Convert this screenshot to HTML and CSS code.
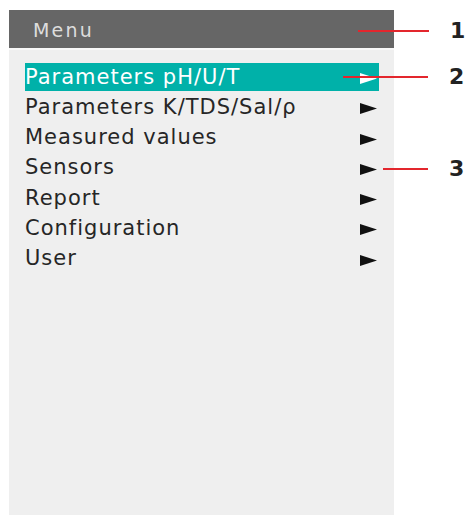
FILE: index.html
```html
<!DOCTYPE html>
<html lang="en">
<head>
    <meta charset="UTF-8">
    <meta name="viewport" content="width=device-width, initial-scale=1.0">
    <title>Menu</title>
    <link rel="stylesheet" href="styles.css">
</head>
<body>
    <div class="screen">
        <div class="header">Menu</div>
        <ul class="menu">
            <li class="item selected"><span>Parameters pH/U/T</span><svg class="arrow" width="17" height="11" viewBox="0 0 17 11"><polygon points="0,0 17,5.5 0,11"/></svg></li>
            <li class="item"><span>Parameters K/TDS/Sal/ρ</span><svg class="arrow" width="17" height="11" viewBox="0 0 17 11"><polygon points="0,0 17,5.5 0,11"/></svg></li>
            <li class="item"><span>Measured values</span><svg class="arrow" width="17" height="11" viewBox="0 0 17 11"><polygon points="0,0 17,5.5 0,11"/></svg></li>
            <li class="item"><span>Sensors</span><svg class="arrow" width="17" height="11" viewBox="0 0 17 11"><polygon points="0,0 17,5.5 0,11"/></svg></li>
            <li class="item"><span>Report</span><svg class="arrow" width="17" height="11" viewBox="0 0 17 11"><polygon points="0,0 17,5.5 0,11"/></svg></li>
            <li class="item"><span>Configuration</span><svg class="arrow" width="17" height="11" viewBox="0 0 17 11"><polygon points="0,0 17,5.5 0,11"/></svg></li>
            <li class="item"><span>User</span><svg class="arrow" width="17" height="11" viewBox="0 0 17 11"><polygon points="0,0 17,5.5 0,11"/></svg></li>
        </ul>
    </div>

    <!-- callouts -->
    <div class="callout c1"><span class="line"></span><span class="num">1</span></div>
    <div class="callout c2"><span class="line"></span><span class="num">2</span></div>
    <div class="callout c3"><span class="line"></span><span class="num">3</span></div>
</body>
</html>
```

FILE: styles.css
```css
body {
    margin: 0;
    padding: 0;
    background-color: #fff;
    font-family: "DejaVu Sans", Verdana, sans-serif;
    width: 470px;
    height: 515px;
    overflow: hidden;
    position: relative;
}
.screen {
    margin: 10px 0 0 9px;
    width: 385px;
    height: 505px;
    background-color: #efefef;
}
.header {
    height: 40px;
    line-height: 38px;
    padding: 1px 0 0 24px;
    box-sizing: border-box;
    background-color: #666;
    border-bottom: 2px solid #f8f8f8;
    color: #ddd;
    font-size: 19px;
    letter-spacing: 2.2px;
}
.menu {
    list-style-type: none;
    margin: 0;
    padding: 12.5px 15px 0 16px;
    display: flex;
    flex-direction: column;
    gap: 2.25px;
}
.item {
    height: 28px;
    line-height: 28px;
    display: flex;
    justify-content: space-between;
    align-items: center;
    padding-right: 2px;
    color: #262626;
    font-size: 21px;
    letter-spacing: 1px;
    white-space: nowrap;
}
.item.selected {
    background-color: #00b1a9;
    color: #fff;
}
.arrow {
    margin-top: 4px;
    fill: #111;
}
.selected .arrow {
    fill: #fff;
}
.callout {
    position: absolute;
    display: flex;
    align-items: center;
}
.line {
    display: block;
    height: 2px;
    background-color: #e3262d;
}
.num {
    margin-left: 21px;
    font-weight: bold;
    font-size: 22px;
    line-height: 22px;
    color: #222;
}
.c1 {
    left: 358px;
    top: 20px;
}
.c1 .line {
    width: 71px;
}
.c2 {
    left: 343px;
    top: 66px;
}
.c2 .line {
    width: 85px;
}
.c3 {
    left: 383px;
    top: 158px;
}
.c3 .line {
    width: 45px;
}
```
